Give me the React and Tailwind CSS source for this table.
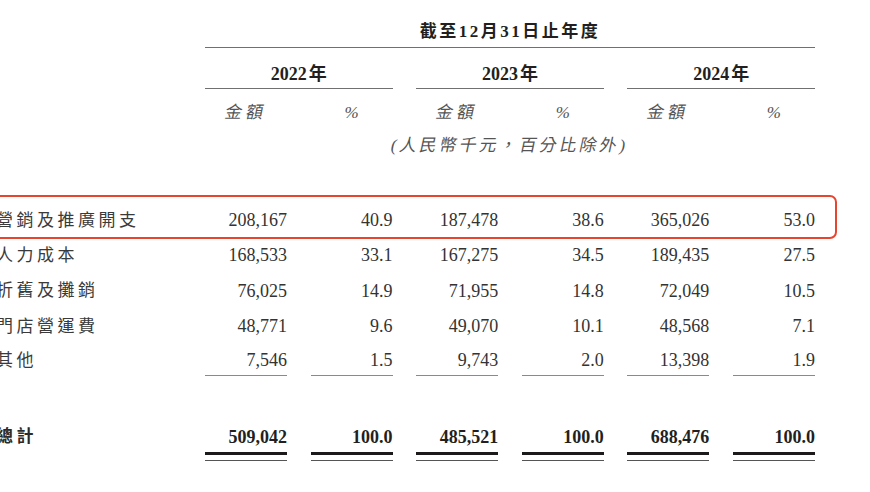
import React from "react";

const rows = [
  ["營銷及推廣開支", "208,167", "40.9", "187,478", "38.6", "365,026", "53.0"],
  ["人力成本", "168,533", "33.1", "167,275", "34.5", "189,435", "27.5"],
  ["折舊及攤銷", "76,025", "14.9", "71,955", "14.8", "72,049", "10.5"],
  ["門店營運費", "48,771", "9.6", "49,070", "10.1", "48,568", "7.1"],
  ["其他", "7,546", "1.5", "9,743", "2.0", "13,398", "1.9"],
];

const totals = ["509,042", "100.0", "485,521", "100.0", "688,476", "100.0"];

const grid =
  "grid grid-cols-[181.4px_82px_82px_82px_82px_82px_82px] gap-x-[23.6px]";

export default function App() {
  return (
    <div className="w-[870px] h-[492px] bg-white overflow-hidden text-[#333]">
      <div className="font-['Liberation_Serif','Noto_Sans_CJK_TC',serif]">
        {/* Header */}
        <div className={grid}>
          <div />
          <div className="col-span-6 pt-[20px] pb-[3px] leading-[24px] text-center text-[17px] font-bold tracking-[2.5px] text-[#231f20] border-b-[1.5px] border-[#707070]">
            截至12月31日止年度
          </div>
        </div>
        {/* Years */}
        <div className={grid}>
          <div />
          {["2022", "2023", "2024"].map((y) => (
            <div
              key={y}
              className="col-span-2 pt-[13.5px] pb-[2px] leading-[24px] text-center text-[18px] font-bold text-[#231f20] border-b-[1.5px] border-[#707070]"
            >
              {y}
              <span className="ml-[2px]">年</span>
            </div>
          ))}
        </div>
        {/* 金額 % */}
        <div className={`${grid} pt-[12.5px]`}>
          <div />
          {[0, 1, 2].map((i) => (
            <React.Fragment key={i}>
              <div className="leading-[24px] text-center text-[17px] text-[#555]">
                <span className="inline-block -skew-x-[12deg] tracking-[4px]">
                  金額
                </span>
              </div>
              <div className="leading-[24px] text-center text-[17px] italic text-[#555]">
                %
              </div>
            </React.Fragment>
          ))}
        </div>
        {/* unit */}
        <div className={`${grid} mt-[9px]`}>
          <div />
          <div className="col-span-6 leading-[24px] text-center text-[17px] text-[#555]">
            <span className="inline-block -skew-x-[12deg] tracking-[3px]">
              (人民幣千元，百分比除外)
            </span>
          </div>
        </div>
        {/* Data rows */}
        <div className="mt-[45px]">
          {rows.map((r, ri) => {
            const last = ri === rows.length - 1;
            return (
              <div key={ri} className={`${grid} relative`}>
                <div
                  className={`-ml-[4px] whitespace-nowrap text-[17px] tracking-[3.5px] text-[#3a3a3a] flex items-center ${
                    last ? "h-[32px] pt-[2px]" : "h-[35.25px]"
                  }`}
                >
                  {r[0]}
                </div>
                {r.slice(1).map((v, ci) => (
                  <div
                    key={ci}
                    className={`flex items-center justify-end text-[18px] ${
                      last
                        ? "h-[32px] pt-[2px] border-b border-[#8a8a8a]"
                        : "h-[35.25px]"
                    }`}
                  >
                    {v}
                  </div>
                ))}
                {ri === 0 && (
                  <div className="absolute left-[-12px] right-[33px] top-[-8px] bottom-[-1px] border-2 border-[#e8452f] rounded-[7px] pointer-events-none" />
                )}
              </div>
            );
          })}
        </div>
        {/* Total */}
        <div className={`${grid} mt-[49px]`}>
          <div className="-ml-[4px] leading-[24px] text-[17px] font-bold tracking-[3.5px] text-[#2a2a2a]">
            總計
          </div>
          {totals.map((v, i) => (
            <div key={i}>
              <div className="text-right leading-[24px] text-[18px] font-bold text-[#231f20] pb-[3px] border-b-[3.5px] border-[#1c1a1a]">
                {v}
              </div>
              <div className="mt-[4.5px] h-[1.5px] bg-[#555]" />
            </div>
          ))}
        </div>
      </div>
    </div>
  );
}
